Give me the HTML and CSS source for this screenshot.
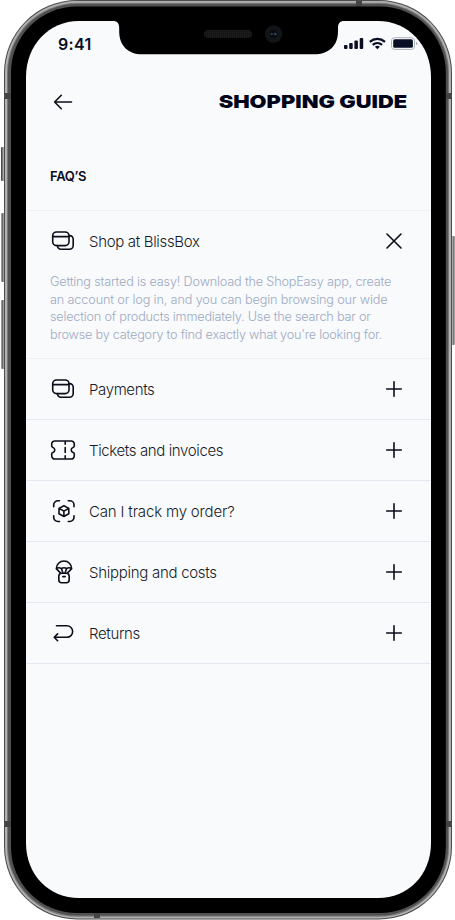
FILE: index.html
```html
<!DOCTYPE html>
<html lang="en">
<head>
<meta charset="utf-8">
<title>Shopping guide</title>
<link rel="stylesheet" href="styles.css">
</head>
<body>
<svg class="defs" width="0" height="0" aria-hidden="true">
  <symbol id="cards" viewBox="0 0 26 26"><rect x="2.7" y="4" width="16.3" height="13.6" rx="3.8"/><path d="M2.7 8.6H19M19 7.6h.6a3.6 3.6 0 0 1 3.6 3.6V17.4a3.8 3.8 0 0 1-3.8 3.8H11a3.6 3.6 0 0 1-3.6-3.6"/></symbol>
  <symbol id="plus" viewBox="0 0 18 18"><path d="M9 1.7v14.6M1.7 9h14.6"/></symbol>
</svg>
<div class="phone">
  <svg class="frame" viewBox="0 0 455 920" aria-hidden="true">
    <defs>
      <linearGradient id="key"><stop offset="0" stop-color="#333"/><stop offset=".5" stop-color="#aaa"/><stop offset="1" stop-color="#444"/></linearGradient>
      <pattern id="mesh" width="2" height="2" patternUnits="userSpaceOnUse"><rect width="2" height="2" fill="#141414"/><rect width="1" height="1" fill="#222"/></pattern>
    </defs>
    <g fill="url(#key)">
      <rect x="1" y="147" width="5" height="34" rx="1"/><rect x="1.5" y="213" width="4.5" height="69" rx="1"/><rect x="1.5" y="300" width="4.5" height="69" rx="1"/><rect x="450.5" y="236" width="4" height="109" rx="1"/>
    </g>
    <rect x="4" y="0" width="448" height="919.5" rx="73" fill="#4b4b4b"/>
    <rect x="5" y="1" width="446" height="917.5" rx="72" fill="#b2b2b2"/>
    <rect x="7" y="2.8" width="442" height="914" rx="70" fill="#777"/>
    <rect x="8" y="4" width="440" height="911.5" rx="69" fill="#505050"/>
    <g fill="#444"><rect x="5" y="93" width="6" height="6"/><rect x="446" y="93" width="5" height="6"/><rect x="5" y="821" width="6" height="6"/><rect x="446" y="821" width="5" height="6"/><rect x="356" y="1" width="6" height="6"/><rect x="94" y="913" width="6" height="5"/></g>
    <rect x="11" y="6.5" width="434.8" height="906.5" rx="66" fill="#000"/>
    <path d="M79 21H378C408 21 431 45 431 77V843C431 875 408 898 378 898H79C49 898 26 875 26 843V77C26 45 49 21 79 21Z" fill="#f9fafc"/>
    <path d="M112 20.800c5 0 7.200 2 7.200 7.200v3.500c0 14 9 22.800 22.800 22.800H314c15 0 24-8.800 24-22.800V28c0-5.200 2.200-7.200 7.200-7.200Z" fill="#000"/>
    <rect x="204" y="30" width="48" height="8" rx="4" fill="url(#mesh)"/>
    <circle cx="273.600" cy="34" r="8.700" fill="#111517"/><circle cx="273.600" cy="34" r="4" fill="#090b10"/><circle cx="271.700" cy="34" r="1.300" fill="#28354b"/><circle cx="275.300" cy="34" r="1.300" fill="#344463"/>
  </svg>
  <main class="screen">
    <div class="status">
      <span class="time">9:41</span>
      <svg width="74" height="14" viewBox="0 0 74 14" fill="#0a0e25">
        <rect x="0" y="8" width="3.500" height="4" rx="1"/><rect x="5.200" y="6" width="3.500" height="6" rx="1"/><rect x="10.400" y="3.500" width="3.500" height="8.500" rx="1"/><rect x="15.700" y="1" width="3.500" height="11" rx="1"/>
        <g fill="none" stroke="#0a0e25" stroke-width="2.200"><path d="M25.800 4.800C30.300.900 36.500.900 41 4.800"/><path d="M28.700 7.900c2.800-2.400 6.600-2.400 9.400 0"/></g><path d="M30.900 9.700c1.500-1.200 3.500-1.200 5 0L33.400 12.200Z"/>
        <rect x="47.500" y=".7" width="23" height="11.700" rx="3" fill="none" stroke="#aeb1b9"/><rect x="49.200" y="2.300" width="19.700" height="8.500" rx="1.600"/><path d="M72 4.700c2 .7 2 2.900 0 3.600Z" fill="#aeb1b9"/>
      </svg>
    </div>
    <header class="header">
      <svg class="ico back" width="20" height="18" viewBox="0 0 20 18"><path d="M18.500 9H2M8.300 2.300 1.600 9l6.700 6.700"/></svg>
      <h1>SHOPPING GUIDE</h1>
    </header>
    <h2>FAQ’S</h2>
    <section class="item open">
      <div class="row"><svg class="ico lead"><use href="#cards"/></svg><span class="label l1">Shop at BlissBox</span><svg class="ico act" viewBox="0 0 18 18"><path d="m2 2 14 14M16 2 2 16"/></svg></div>
      <p><span class="p1">Getting started is easy! Download the ShopEasy app, create</span><span class="p2">an account or log in, and you can begin browsing our wide</span><span class="p3">selection of products immediately. Use the search bar or</span><span class="p4">browse by category to find exactly what you're looking for.</span></p>
    </section>
    <section class="item row"><svg class="ico lead"><use href="#cards"/></svg><span class="label l2">Payments</span><svg class="ico act"><use href="#plus"/></svg></section>
    <section class="item row"><svg class="ico lead" viewBox="0 0 26 26"><path d="M5.300 4h15.400a3.200 3.200 0 0 1 3.600 3.600v1.200c0 1-.5 1.500-1.200 1.700a2.600 2.600 0 0 0 0 5c.7.200 1.200.7 1.200 1.700v1.200a3.200 3.200 0 0 1-3.600 3.600H5.300a3.200 3.200 0 0 1-3.600-3.600v-1.200c0-1 .5-1.500 1.200-1.700a2.600 2.600 0 0 0 0-5c-.7-.2-1.200-.7-1.200-1.700V7.600A3.200 3.200 0 0 1 5.300 4ZM15.200 4v3.300M15.200 10.500v5M15.200 18.700V22"/></svg><span class="label l3">Tickets and invoices</span><svg class="ico act"><use href="#plus"/></svg></section>
    <section class="item row"><svg class="ico lead" viewBox="0 0 26 26"><path d="M3.700 8.700V7a4.200 4.200 0 0 1 4.200-4.200h1.600M18.300 2.800h1.500A4.200 4.200 0 0 1 24 7v1.700M24 17.700v1.600a4.200 4.200 0 0 1-4.200 4.200h-1.500M9.500 23.500H7.900a4.200 4.200 0 0 1-4.200-4.200v-1.600M13.900 7.800l4.900 2.600v5.400l-4.900 2.700L9 15.800v-5.400ZM9 10.400l4.900 2.700 4.900-2.700M13.900 13.100v5.400"/></svg><span class="label l4">Can I track my order?</span><svg class="ico act"><use href="#plus"/></svg></section>
    <section class="item row"><svg class="ico lead" viewBox="0 0 26 26"><path d="M6.300 9.700a7.700 7.700 0 0 1 15.400 0c-2.200-1.500-3.700-1.300-5.100 0-1.700-1.300-3.500-1.300-5.200 0-1.600-1.300-3.200-1.300-5.100 0ZM6.500 9.900l3.900 4M11.500 9.800l1.300 4M16.500 9.800l-1.300 4M21.500 9.900l-3.900 4"/><rect x="8.800" y="14.200" width="10.400" height="9.500" rx="3"/><path d="M12.800 17.600h2.400"/></svg><span class="label l5">Shipping and costs</span><svg class="ico act"><use href="#plus"/></svg></section>
    <section class="item row"><svg class="ico lead" viewBox="0 0 26 26"><path d="M6.500 5.800h10.400a5.700 5.700 0 0 1 0 11.500H4.400M7.600 13.900l-3.400 3.400 3.400 3.400"/></svg><span class="label l6">Returns</span><svg class="ico act"><use href="#plus"/></svg></section>
  </main>
</div>
</body>
</html>
```
FILE: styles.css
```css
* { box-sizing: border-box; }
body { margin: 0; background: #fff; font-family: Inter, sans-serif; color: #171a28; }
.defs { position: absolute; }
.phone { position: relative; width: 455px; height: 920px; overflow: hidden; }
.frame { position: absolute; inset: 0; width: 455px; height: 920px; }
.screen { position: relative; width: 405px; margin-left: 26px; padding-top: 21px; }
.ico { fill: none; stroke: #0b0d1b; stroke-width: 1.6; stroke-linecap: round; stroke-linejoin: round; flex: none; }
.status { height: 46px; display: flex; justify-content: space-between; align-items: center; padding: 0 13px 0 32px; }
.time { font-size: 16px; font-weight: 600; color: #0a0e25; letter-spacing: .3px; }
.header { height: 70px; display: flex; align-items: center; justify-content: space-between; padding: 0 24px 0 27px; }
h1 { margin: 0; font-size: 18px; line-height: 22px; font-weight: 900; color: #02051a; transform: scaleX(1.215); transform-origin: right; white-space: nowrap; }
h2 { margin: 0; height: 73px; padding: 30px 24px 0; font-size: 13px; line-height: 18px; font-weight: 600; color: #0b0d1b; letter-spacing: -.3px; }
.item { height: 61px; border-bottom: 1px solid #e4e9f1; }
.row { display: flex; align-items: center; padding: 0 28px 0 24px; }
.lead { width: 26px; height: 26px; margin-right: 13px; }
.label { font-size: 15px; font-weight: 300; white-space: nowrap; padding-top: 1px; }
.l1 { letter-spacing: -.33px; }
.l2 { letter-spacing: -.37px; }
.l3 { letter-spacing: -.38px; }
.l4 { letter-spacing: -.17px; }
.l5 { letter-spacing: -.28px; }
.l6 { letter-spacing: -.35px; }
.act { width: 18px; height: 18px; margin-left: auto; }
.open { height: 149px; border-top: 1px solid #edf0f5; border-bottom-color: #edf0f5; }
.open .row { height: 60px; }
p { margin: 2px 24px 0; font-size: 12.7px; line-height: 17.5px; font-weight: 300; color: #9daac3; }
p span { display: block; width: max-content; white-space: nowrap; }
.p1 { letter-spacing: -.19px; }
.p2 { letter-spacing: -.15px; }
.p3 { letter-spacing: -.215px; }
.p4 { letter-spacing: -.225px; }
```
